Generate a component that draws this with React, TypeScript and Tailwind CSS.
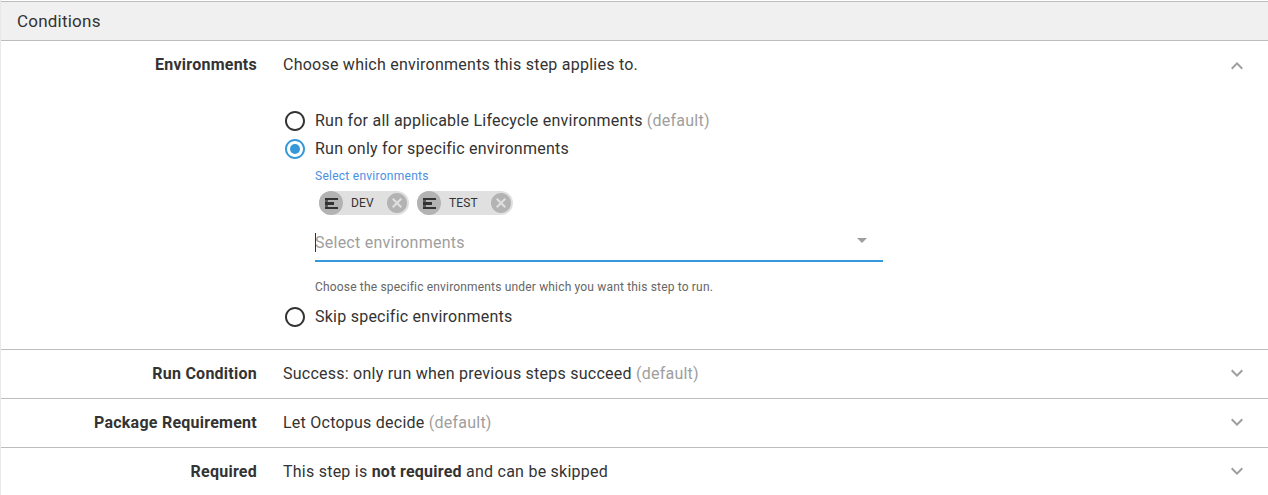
import React from "react";

const Chevron = ({ up = false }: { up?: boolean }) => (
  <svg width="24" height="24" viewBox="0 0 24 24" className="fill-[#9e9e9e]">
    <path d={up ? "M12 8l-6 6 1.41 1.41L12 10.83l4.59 4.58L18 14z" : "M16.59 8.59L12 13.17 7.41 8.59 6 10l6 6 6-6z"} />
  </svg>
);

const Radio = ({ checked = false, label, hint }: { checked?: boolean; label: string; hint?: string }) => (
  <div className="flex items-center h-[28px]">
    <svg width="24" height="24" viewBox="0 0 24 24" className={checked ? "fill-[#3498db]" : "fill-[#333333]"}>
      <path d="M12 2C6.48 2 2 6.48 2 12s4.48 10 10 10 10-4.48 10-10S17.52 2 12 2zm0 18c-4.42 0-8-3.58-8-8s3.58-8 8-8 8 3.58 8 8-3.58 8-8 8z" />
      {checked && <circle cx="12" cy="12" r="5" />}
    </svg>
    <span className="ml-[8px] text-[16px] tracking-[0.24px] text-[#333333]">
      {label}
      {hint && <span className="text-[#9e9e9e]"> {hint}</span>}
    </span>
  </div>
);

const Chip = ({ label, width }: { label: string; width: string }) => (
  <div className={`flex items-center h-[24px] rounded-full bg-[#e0e0e0] ${width}`}>
    <div className="w-[24px] h-[24px] rounded-full bg-[#b3b3b3] flex items-center justify-center shrink-0">
      <svg width="13" height="11" viewBox="0 0 13 11" className="fill-[#333333]">
        <rect x="0" y="0" width="13" height="2" />
        <rect x="0" y="2" width="3" height="2" opacity="0.7" />
        <rect x="0" y="4" width="9" height="3" />
        <rect x="0" y="7" width="3" height="2" opacity="0.7" />
        <rect x="0" y="9" width="13" height="2" />
      </svg>
    </div>
    <span className="ml-[8px] flex-1 text-[12px] tracking-[0.1px] text-[#333333] font-normal">{label}</span>
    <svg width="24" height="24" viewBox="0 0 24 24" className="fill-[#b3b3b3] shrink-0">
      <path d="M12 2C6.47 2 2 6.47 2 12s4.47 10 10 10 10-4.47 10-10S17.53 2 12 2zm5 13.59L15.59 17 12 13.41 8.41 17 7 15.59 10.59 12 7 8.41 8.41 7 12 10.59 15.59 7 17 8.41 13.41 12 17 15.59z" />
    </svg>
  </div>
);

const Row = ({ label, children, up = false, open }: { label: string; children: React.ReactNode; up?: boolean; open?: React.ReactNode }) => (
  <div className="border-b border-[#bdbdbd]">
    <div className="flex items-start pt-[12px] h-[48px]">
      <div className="w-[256px] text-right text-[16px] tracking-[0.25px] font-bold text-[#333333] leading-[24px] shrink-0">{label}</div>
      <div className="ml-[26px] flex-1 text-[16px] tracking-[0.24px] text-[#333333] leading-[24px]">{children}</div>
      <div className={up ? "w-[24px] mr-[19px] h-[24px] shrink-0 mt-px" : "w-[24px] mr-[19px] h-[24px] shrink-0 -mt-px"}>
        <Chevron up={up} />
      </div>
    </div>
    {open}
  </div>
);

export default function App() {
  return (
    <div className="w-[1268px] h-[495px] overflow-hidden bg-white border-l border-[#e8e8e8] font-['Roboto',sans-serif] box-border">
      <div className="mt-px h-[40px] bg-[#f0f0f0] border-t border-b border-[#bdbdbd] flex items-center pl-[16px] pt-[1px] text-[17px] tracking-[0.22px] text-[#333333] box-border">
        Conditions
      </div>
      <Row
        label="Environments"
        up
        open={
          <div className="pl-[282px] pt-[18px] h-[260px]">
            <Radio label="Run for all applicable Lifecycle environments" hint="(default)" />
            <Radio checked label="Run only for specific environments" />
            <div className="pl-[32px]">
              <div className="mt-[5px] text-[12px] tracking-[0.26px] leading-[16px] text-[#4a90e2]">Select environments</div>
              <div className="flex gap-[8px] mt-[7px] pl-[4px]">
                <Chip label="DEV" width="w-[90px]" />
                <Chip label="TEST" width="w-[96px]" />
              </div>
              <div className="relative w-[568px] h-[42px] mt-[5px] border-b-2 border-[#3498db] flex items-center pt-[6px]">
                <span className="absolute left-0 top-[13px] w-px h-[19px] bg-[#333333]" />
                <span className="text-[16px] tracking-[0.25px] text-[#9e9e9e]">Select environments</span>
                <svg width="24" height="24" viewBox="0 0 24 24" className="absolute right-[9px] top-[8px] fill-[#9e9e9e]">
                  <path d="M7 10l5 5 5-5z" />
                </svg>
              </div>
              <div className="mt-[17px] text-[12px] tracking-[0.17px] leading-[16px] text-[#666666]">
                Choose the specific environments under which you want this step to run.
              </div>
            </div>
            <div className="mt-[8px]">
              <Radio label="Skip specific environments" />
            </div>
          </div>
        }
      >
        Choose which environments this step applies to.
      </Row>
      <Row label="Run Condition">
        Success: only run when previous steps succeed <span className="text-[#9e9e9e]">(default)</span>
      </Row>
      <Row label="Package Requirement">
        Let Octopus decide <span className="text-[#9e9e9e]">(default)</span>
      </Row>
      <Row label="Required">
        This step is <b>not required</b> and can be skipped
      </Row>
    </div>
  );
}
